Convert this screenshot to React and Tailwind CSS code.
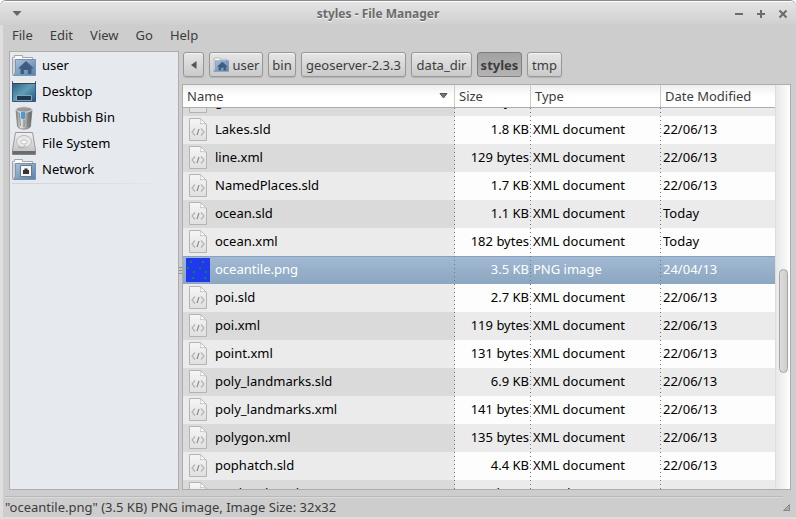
import React from "react";

const files = [
  ["grass.sld", "988 bytes", "XML document", "22/06/13"],
  ["Lakes.sld", "1.8 KB", "XML document", "22/06/13"],
  ["line.xml", "129 bytes", "XML document", "22/06/13"],
  ["NamedPlaces.sld", "1.7 KB", "XML document", "22/06/13"],
  ["ocean.sld", "1.1 KB", "XML document", "Today"],
  ["ocean.xml", "182 bytes", "XML document", "Today"],
  ["oceantile.png", "3.5 KB", "PNG image", "24/04/13"],
  ["poi.sld", "2.7 KB", "XML document", "22/06/13"],
  ["poi.xml", "119 bytes", "XML document", "22/06/13"],
  ["point.xml", "131 bytes", "XML document", "22/06/13"],
  ["poly_landmarks.sld", "6.9 KB", "XML document", "22/06/13"],
  ["poly_landmarks.xml", "141 bytes", "XML document", "22/06/13"],
  ["polygon.xml", "135 bytes", "XML document", "22/06/13"],
  ["pophatch.sld", "4.4 KB", "XML document", "22/06/13"],
  ["pophatch.xml", "122 bytes", "XML document", "22/06/13"],
];

function XmlIcon() {
  return (
    <svg width="24" height="24" viewBox="0 0 24 24" className="block shrink-0">
      <defs>
        <linearGradient id="page" x1="0" y1="0" x2="0" y2="1">
          <stop offset="0" stopColor="#f6f6f6" />
          <stop offset="1" stopColor="#dfdfdf" />
        </linearGradient>
      </defs>
      <path d="M3.500.500h11l6 6v16h-17z" fill="url(#page)" stroke="#b4b4b4" />
      <path d="M14.500.500c.6 2 .4 3.500-.3 5.300 2-.5 4.800-.3 6.300.7z" fill="#fff" stroke="#b8b8b8" strokeWidth=".8" />
      <path d="M9 10.500l-3 3.500 3 3.500M15 10.500l3 3.500-3 3.500" fill="none" stroke="#b4b4b4" strokeWidth="1.200" />
      <path d="M13 11l-2 6" fill="none" stroke="#8c8c8c" strokeWidth="1.200" />
    </svg>
  );
}

function TileIcon() {
  const dots = [[4, 3], [16, 3], [1, 9], [13, 9], [7, 13], [19, 13], [6, 19], [18, 19]];
  return (
    <svg width="24" height="24" viewBox="0 0 24 24" className="block shrink-0">
      <path d="M0 0h24v24H0z" fill="#2039ee" />
      {dots.map(([x, y]) => (
        <rect key={x + "-" + y} x={x} y={y} width="2" height="2" fill="#0a8a40" />
      ))}
    </svg>
  );
}

function FolderBase({ children, size }) {
  return (
    <svg width={size} height={size} viewBox="0 0 24 24" className="block shrink-0">
      <defs>
        <linearGradient id="folder" x1="0" y1="0" x2="1" y2="1">
          <stop offset="0" stopColor="#adc5dd" />
          <stop offset="1" stopColor="#5480b0" />
        </linearGradient>
      </defs>
      <path d="M.5 21V3.500h2v-2h8v2h10V20z" fill="#fafafa" stroke="#a5a5a5" />
      <path d="M1 5l3 0v16H1z" fill="#d4d4d4" />
      <path d="M3.500 5.500h20v16H1.500c2-2 2-4 2-7z" fill="url(#folder)" stroke="#7892b0" />
      {children}
    </svg>
  );
}

function HomeIcon({ size = 24 }) {
  return (
    <FolderBase size={size}>
      <path d="M14 7l8 7.500h-2.500V20h-3.500v-4h-4v4H8.500v-5.500H6z" fill="#3f5d80" />
    </FolderBase>
  );
}

function NetworkIcon() {
  return (
    <FolderBase size={24}>
      <path d="M8.500 7.500h11v11h-11z" fill="#f5f5f5" stroke="#777" />
      <path d="M11 16v-4h1.500v-1.500h3V12H17v4z" fill="#333" />
    </FolderBase>
  );
}

function DesktopIcon() {
  return (
    <svg width="24" height="24" viewBox="0 0 24 24" className="block shrink-0">
      <defs>
        <linearGradient id="desk" x1="0" y1="0" x2="1" y2="1">
          <stop offset="0" stopColor="#26577f" />
          <stop offset=".5" stopColor="#5f9fb5" />
          <stop offset="1" stopColor="#25548b" />
        </linearGradient>
      </defs>
      <path d="M.5 1.500h23v20H.5z" fill="url(#desk)" stroke="#35577c" />
      <path d="M1 1h22v2H1z" fill="#eee" />
      <path d="M0 3h24v1H0z" fill="#444" />
      <path d="M4.500 15.500h15v5h-15z" fill="#22384e" stroke="#7ea6c0" />
    </svg>
  );
}

function BinIcon() {
  return (
    <svg width="24" height="24" viewBox="0 0 24 24" className="block shrink-0">
      <defs>
        <linearGradient id="bin" x1="0" y1="0" x2="1" y2="0">
          <stop offset="0" stopColor="#777" />
          <stop offset=".3" stopColor="#e4e4e4" />
          <stop offset=".65" stopColor="#a2a2a2" />
          <stop offset="1" stopColor="#5c5c5c" />
        </linearGradient>
      </defs>
      <path d="M4 3.500l1.500 17c2 3.500 11 3.500 13 0L20 3.500z" fill="url(#bin)" stroke="#777" strokeWidth=".7" />
      <ellipse cx="12" cy="3.500" rx="8" ry="2.700" fill="#999" stroke="#ddd" />
      <path d="M9 6h4v6l-2 1.500L9 12z" fill="#4a9bd1" />
      <path d="M7.500 7l1 13M16.500 7l-1 13M12 14v7" stroke="#737373" fill="none" strokeWidth=".7" />
    </svg>
  );
}

function DiskIcon() {
  return (
    <svg width="24" height="24" viewBox="0 0 24 24" className="block shrink-0">
      <defs>
        <linearGradient id="disk" x1="0" y1="0" x2="0" y2="1">
          <stop offset="0" stopColor="#f1f1f1" />
          <stop offset="1" stopColor="#bdbdbd" />
        </linearGradient>
      </defs>
      <path d="M3.500.5h17l3 17.500v4.500H.5V18z" fill="url(#disk)" stroke="#999" />
      <path d="M.5 19h23v3.500H.5z" fill="#6c6c6c" />
      <ellipse cx="12" cy="9.500" rx="7.500" ry="6" fill="#e8e8e8" stroke="#b9b9b9" />
      <ellipse cx="12" cy="10" rx="3" ry="2" fill="#fafafa" stroke="#aaa" strokeWidth=".7" />
      <path d="M6 15c3 2 6 1 7-2" fill="none" stroke="#aaa" />
    </svg>
  );
}

const places = [
  ["user", HomeIcon],
  ["Desktop", DesktopIcon],
  ["Rubbish Bin", BinIcon],
  ["File System", DiskIcon],
  ["Network", NetworkIcon],
];

function WindowButton({ label, children }) {
  return (
    <button aria-label={label} className="flex size-[22px] items-center justify-center text-[#6b6b6b]">
      <svg width="10" height="10" viewBox="0 0 10 10" fill="none" stroke="currentColor" strokeWidth="2">
        {children}
      </svg>
    </button>
  );
}

function PathButton({ children, active, label, className = "" }) {
  const look = active
    ? "bg-linear-to-b from-[#a2a2a2] to-[#b4b4b4] border-[#7f7f7f] font-bold"
    : "bg-linear-to-b from-[#e6e6e6] to-[#cacaca] border-[#979797] shadow-[inset_0_1px_0_#f4f4f4,0_1px_1px_#b4b4b4]";
  return (
    <button
      aria-label={label}
      className={"flex h-[25px] shrink-0 items-center justify-center rounded-[3px] border text-[#3c3c3c] " + look + " " + className}
    >
      {children}
    </button>
  );
}

function FileRow({ file, index }) {
  const [name, size, type, date] = file;
  const selected = name === "oceantile.png";
  const odd = index % 2 === 0;
  const row = selected
    ? "bg-linear-to-b from-[#a3b9d3] to-[#8ba7c1] text-white shadow-[inset_0_1px_0_#86a3bf]"
    : odd
      ? "bg-[#ebebeb]"
      : "bg-[#fdfdfd]";
  const nameBg = selected ? "" : odd ? "bg-[#dadada]" : "bg-[#ebebeb]";
  const line =
    " bg-[image:repeating-linear-gradient(to_bottom,#777_0px,#777_1px,transparent_1px,transparent_4px)] bg-[length:1px_100%] bg-right bg-no-repeat";
  return (
    <tr className={"h-7 " + row}>
      <td className={"p-0" + line + " " + nameBg}>
        <div className="flex items-center gap-[5px] pl-[3px]">
          {selected ? <TileIcon /> : <XmlIcon />}
          <span className="pb-0.5">{name}</span>
        </div>
      </td>
      <td className={"p-0 pr-0.5 pb-0.5 text-right" + line}>{size}</td>
      <td className={"p-0 pb-0.5 pl-0.5" + line}>{type}</td>
      <td className="p-0 pb-0.5 pl-0.5">{date}</td>
    </tr>
  );
}

function Columns() {
  return (
    <colgroup>
      <col />
      <col className="w-[76px]" />
      <col className="w-[130px]" />
      <col className="w-[114px]" />
    </colgroup>
  );
}

export default function App() {
  return (
    <div className="flex h-screen flex-col overflow-hidden rounded-t-md border-t border-[#8a8a8a] bg-[#cdcdcd] font-['Noto_Sans',sans-serif] text-[13px] leading-5 text-black">
      <header className="flex h-6 shrink-0 items-center border-t border-white bg-linear-to-b from-[#e4e4e4] to-[#cfcfcf] pr-0.5 pl-1.5">
        <button aria-label="Window menu" className="flex w-[22px] items-center pl-1.5">
          <svg width="10" height="6" viewBox="0 0 10 6">
            <path d="M.5 0h9L5 5z" fill="#666" />
          </svg>
        </button>
        <h1 className="flex-1 text-center text-[12px] font-bold text-[#6b6b6b] [text-shadow:0_1px_0_#f2f2f2]">styles - File Manager</h1>
        <WindowButton label="Minimise"><path d="M1 5h8" /></WindowButton>
        <WindowButton label="Maximise"><path d="M1 5h8M5 1v8" /></WindowButton>
        <WindowButton label="Close"><path d="M1.500 1.500l7 7M8.500 1.500l-7 7" /></WindowButton>
      </header>

      <div className="flex min-h-0 flex-1 flex-col border-b-2 border-l-3 border-[#dedede]">
        <nav className="flex h-[26px] shrink-0 items-start gap-[17px] pl-[9px] text-[#3c3c3c]">
          {["File", "Edit", "View", "Go", "Help"].map((item) => (
            <button key={item}>{item}</button>
          ))}
        </nav>

        <main className="flex min-h-0 flex-1 pr-[5px] pl-1.5">
          <aside className="w-[170px] shrink-0 border border-[#adadad] bg-[#e6eaef] px-0.5 py-px">
            <ul>
              {places.map(([name, Icon]) => (
                <li key={name}>
                  <a href="#" className="flex h-[26px] items-center gap-1.5">
                    <Icon />
                    <span className="pb-[3px]">{name}</span>
                  </a>
                </li>
              ))}
            </ul>
            <div className="h-px bg-linear-to-r from-[#cfd3d8] to-transparent" />
          </aside>

          <div className="flex w-[3px] shrink-0 flex-col items-center justify-center gap-0.5">
            <i className="h-px w-full bg-[#909090]" />
            <i className="h-px w-full bg-[#909090]" />
            <i className="h-px w-full bg-[#909090]" />
          </div>

          <section className="flex min-w-0 flex-1 flex-col">
            <div className="flex shrink-0 gap-[5px] pt-px pb-[7px] pl-px">
              <PathButton label="Back" className="w-[21px]">
                <svg width="6" height="8" viewBox="0 0 6 8"><path d="M5.500 0v8L0 4z" fill="#555" /></svg>
              </PathButton>
              <PathButton className="w-[54px] gap-1"><HomeIcon size={16} />user</PathButton>
              <PathButton className="w-7">bin</PathButton>
              <PathButton className="w-[105px]">geoserver-2.3.3</PathButton>
              <PathButton className="w-[61px]">data_dir</PathButton>
              <PathButton active className="w-[45px]">styles</PathButton>
              <PathButton className="w-[35px]">tmp</PathButton>
            </div>

            <div className="flex min-h-0 flex-1 border border-[#adadad] bg-[#fdfdfd]">
              <div className="flex min-w-0 flex-1 flex-col">
                <div className="flex h-[23px] shrink-0 items-center border-b border-[#adadad] bg-linear-to-b from-[#eee] to-white to-50% text-[#3c3c3c]">
                  <button className="flex h-full min-w-0 flex-1 items-center justify-between border-r border-[#ccc] pr-1.5 pl-1">
                    Name
                    <svg width="9" height="6" viewBox="0 0 9 6"><path d="M1 .500h7L4.500 5z" fill="#777" stroke="#555" /></svg>
                  </button>
                  <button className="h-full w-[76px] border-r border-[#ccc] pl-1 text-left">Size</button>
                  <button className="h-full w-[130px] border-r border-[#ccc] pl-1 text-left">Type</button>
                  <button className="h-full w-[114px] pl-1 text-left">Date Modified</button>
                </div>
                <div className="min-h-0 flex-1 overflow-hidden">
                  <table className="-mt-5 w-full table-fixed border-separate border-spacing-0">
                    <Columns />
                    <tbody>
                      {files.map((file, i) => (
                        <FileRow key={file[0]} file={file} index={i} />
                      ))}
                    </tbody>
                  </table>
                </div>
              </div>
              <div className="flex w-[15px] shrink-0 justify-center border-l border-[#ddd] bg-linear-to-r from-[#e8e8e8] to-[#fdfdfd] pt-[184px]">
                <div className="h-[104px] w-[9px] rounded-full border border-[#a5a5a5] bg-linear-to-r from-[#dcdcdc] to-[#cecece]" />
              </div>
            </div>
          </section>
        </main>

        <footer className="mt-1.5 flex h-[21px] shrink-0 items-start justify-between pr-1.5 pl-0.5 text-[#3c3c3c]">
          <p className="flex-1 border-t border-[#b9b9b9] shadow-[inset_0_1px_0_#dadada]">"oceantile.png" (3.5 KB) PNG image, Image Size: 32x32</p>
          <svg width="7" height="7" viewBox="0 0 7 7" className="mb-1.5 self-end"><path d="M6.500.5v6h-6z" fill="#aaa" stroke="#888" /></svg>
        </footer>
      </div>
    </div>
  );
}
